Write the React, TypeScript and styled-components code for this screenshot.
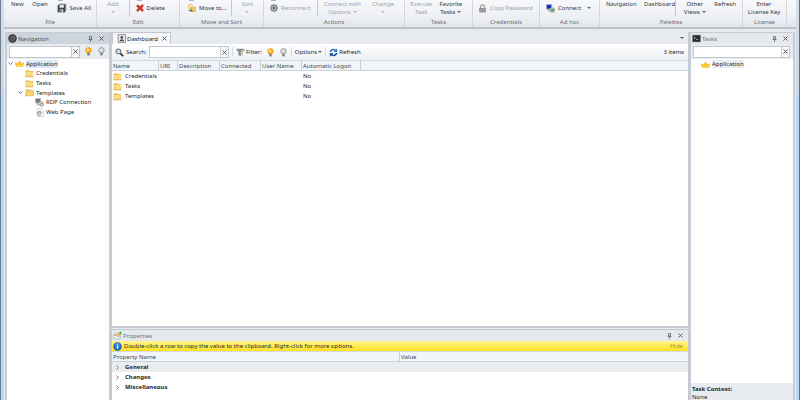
import React from "react";
import styled, { createGlobalStyle, css } from "styled-components";

const font = `"Noto Sans", "Open Sans", sans-serif`;

const GlobalStyle = createGlobalStyle`
  *, *::before, *::after { box-sizing: border-box; }
  html, body, #root { height: 100%; margin: 0; }
  body { font: 6px/8px ${font}; color: #262626; overflow: hidden; }
  button, input, table { font: inherit; color: inherit; }
  button { border: 0; padding: 0; background: none; white-space: nowrap; }
  svg { display: block; flex: none; }
  ul { list-style: none; margin: 0; padding: 0; }
`;

/* ---------- icons ---------- */
type IconProps = { size?: number };

const Svg = ({ size = 9, children }: React.PropsWithChildren<IconProps>) => (
  <svg width={size} height={size} viewBox="0 0 16 16" aria-hidden="true">{children}</svg>
);
const Folder = ({ open = false }: { open?: boolean }) => (
  <Svg>
    <path d="M1 3.500 2 2h5l1 1.500h6.500V14H1z" fill="#e6bb5c" />
    <path d="M1.500 5h13v8.500h-13z" fill="#fbdc84" />
    {open && <path d="M3.500 7H16l-2 7H1z" fill="#f9d577" stroke="#d6a23c" strokeWidth=".8" />}
    {!open && <path d="M1 14h14" stroke="#d9a944" strokeWidth="1.200" />}
  </Svg>
);
const Crown = () => (
  <Svg>
    <path d="M0 6.500l5 2L8 3l3 5.500 5-2-2.500 7h-11z" fill="#f8c826" stroke="#e3ab20" strokeWidth=".8" />
    <path d="M4 11.500h8" stroke="#ffe37a" strokeWidth="1.200" />
  </Svg>
);
const Bulb = ({ lit = false }: { lit?: boolean }) => (
  <Svg>
    <circle cx="8" cy="6" r="5" fill={lit ? "#fdb52b" : "#cfcfcf"} stroke={lit ? "#ec9418" : "#8c8c8c"} strokeWidth="1.200" />
    <circle cx="7" cy="5" r="2" fill={lit ? "#ffe79a" : "#f2f2f2"} />
    <path d="M6 10.500h4V15H6z" fill="#777" />
  </Svg>
);
const Disk = () => (
  <Svg size={10}>
    <path d="M3 1h12v12H3z" fill="#8a9096" />
    <path d="M1 3h12v12H1z" fill="#3d4247" />
    <path d="M4 3h7v4.500H4z" fill="#e3e6e9" />
    <path d="M4 10h6v5H4z" fill="#c4c9ce" />
    <path d="M5 11h2v3H5z" fill="#3d4247" />
  </Svg>
);
const RedCross = () => (
  <Svg size={8}>
    <path d="M2 2.500 14 14M14 2 2 14" stroke="#9f1c10" strokeWidth="4.600" />
    <path d="M2.500 3 13.500 13.500M13.500 2.500 2.500 13.500" stroke="#e0351f" strokeWidth="3" />
  </Svg>
);
const MoveIcon = () => (
  <Svg size={8}>
    <path d="M1 1h7l2 2v6H1z" fill="#fbe7a8" stroke="#d5a93f" />
    <path d="M5 7h10v8H5z" fill="#f6ca58" stroke="#ce9c35" />
    <path d="M1 12h5V9.500L10 13l-4 3v-2H1z" fill="#3b78bd" />
  </Svg>
);
const Reconnect = () => (
  <Svg size={8}>
    <circle cx="8" cy="8" r="7" fill="#8b8b8b" stroke="#767676" />
    <circle cx="8" cy="8" r="5" fill="#b5b5b5" />
    <path d="M6 4.500 11 8l-5 3.500z" fill="#555" />
  </Svg>
);
const Lock = () => (
  <Svg size={9}>
    <path d="M4.500 8V5a3.500 3.500 0 0 1 7 0v3" fill="none" stroke="#a0a0a0" strokeWidth="2.200" />
    <path d="M2 7h12v8H2z" fill="#929292" />
    <path d="M3 9h10M3 12h10" stroke="#b3b3b3" />
  </Svg>
);
const ConnectIcon = () => (
  <Svg size={9}>
    <path d="M1 1h9v8H1z" fill="#1524c0" stroke="#a6adb8" strokeWidth="1.400" />
    <path d="M3 11h5" stroke="#777" strokeWidth="1.500" />
    <path d="M7 7h8v7H7z" fill="#d4dcdf" stroke="#88959c" />
    <path d="M9 9h5v3H9zM9 14h5" fill="#4cb04c" stroke="#4e9e50" />
  </Svg>
);
const RdpIcon = () => (
  <Svg>
    <path d="M1 1h9v8H1z" fill="#777" stroke="#bbb" strokeWidth="1.400" />
    <path d="M3 11h5" stroke="#888" strokeWidth="1.500" />
    <path d="M7 7h7v6H7z" fill="#ddd" stroke="#999" />
    <circle cx="12" cy="12" r="3" fill="#c8c8c8" stroke="#888" />
  </Svg>
);
const WebIcon = () => (
  <Svg>
    <path d="M4 1h8l3 3v11H4z" fill="#f7f7f7" stroke="#b9b9b9" />
    <path d="M10.500 12a3.500 3.500 0 1 1 .9-3H4.500" fill="none" stroke="#858585" strokeWidth="1.600" />
  </Svg>
);
const NavIcon = () => (
  <Svg>
    <circle cx="8" cy="8" r="7.500" fill="#2e3136" />
    <circle cx="8" cy="8" r="4.500" fill="#4b5058" stroke="#8a8f96" />
    <path d="M8 8l4-4" stroke="#e2603b" strokeWidth="1.600" />
  </Svg>
);
const DashIcon = () => (
  <Svg>
    <path d="M2 1h13v14H2z" fill="#e9e9e9" stroke="#777" strokeWidth="1.300" />
    <circle cx="8.500" cy="6" r="2.300" fill="#444" />
    <path d="M4.500 13c0-5 8-5 8 0z" fill="#444" />
  </Svg>
);
const TerminalIcon = () => (
  <Svg>
    <path d="M1 2h14v12H1z" fill="#25282c" stroke="#70757a" />
    <path d="M3 5l3 2-3 2M7 9.500h4" stroke="#ddd" fill="none" strokeWidth="1.200" />
  </Svg>
);
const PropsIcon = () => (
  <Svg size={9}>
    <path d="M1 6h12v8H1z" fill="#eef0f3" stroke="#a6acb4" />
    <path d="M2 8l4-4 7 2-2 4-4-1z" fill="#f1c878" stroke="#c0974f" strokeWidth=".8" />
    <path d="M13 1v5M10.500 3.500h5" stroke="#3ca83c" strokeWidth="2" />
  </Svg>
);
const InfoIcon = () => (
  <Svg>
    <circle cx="8" cy="8" r="7.500" fill="#1d63b5" />
    <circle cx="8" cy="6" r="5" fill="#3f87d3" />
    <path d="M8 3v2M8 6.500v6" stroke="#fff" strokeWidth="2" />
  </Svg>
);
const Magnifier = () => (
  <Svg>
    <circle cx="6" cy="6" r="4.300" fill="#d9dde1" stroke="#6d7379" strokeWidth="1.800" />
    <path d="M9.500 9.500 14.500 14.500" stroke="#2f3336" strokeWidth="3" />
  </Svg>
);
const FunnelIcon = () => (
  <Svg>
    <path d="M1 2h11L8 8v6l-3-2V8z" fill="#8e9296" stroke="#6c7074" />
    <path d="M8 3h7l-4 5v5" fill="none" stroke="#7e8286" strokeWidth="1.500" />
  </Svg>
);
const RefreshIcon = () => (
  <Svg size={9}>
    <path d="M1 7a7 6.500 0 0 1 11-4.500L14.500 1v6H8l2-2C7.500 3 5 4.500 4.500 7z" fill="#3573c8" />
    <path d="M15 9a7 6.500 0 0 1-11 4.500L1.500 15V9H8l-2 2c2.500 2 5 .5 5.500-2z" fill="#1c4fa6" />
  </Svg>
);
const Cross = ({ size = 5 }: IconProps) => (
  <svg width={size} height={size} viewBox="0 0 10 10" aria-hidden="true">
    <path d="M1 1l8 8M9 1 1 9" stroke="#4a4d52" strokeWidth="1.800" />
  </svg>
);
const Pin = () => (
  <svg width="5" height="6" viewBox="0 0 10 12" aria-hidden="true">
    <path d="M3 1h4v5H3zM1 7h8M5 7v5" stroke="#5c6066" strokeWidth="1.500" fill="none" />
  </svg>
);
const Caret = () => (
  <svg width="4" height="2" viewBox="0 0 8 4" aria-hidden="true"><path d="M0 0h8L4 4z" fill="currentColor" fillOpacity=".75" /></svg>
);
const Chevron = ({ open = false }: { open?: boolean }) => (
  <svg width="5" height="5" viewBox="0 0 10 10" aria-hidden="true">
    <path d={open ? "M1 3l4 4 4-4" : "M3 1l4 4-4 4"} stroke="#62666c" strokeWidth="1.800" fill="none" />
  </svg>
);
const Stub = () => (
  <svg width="8" height="1" viewBox="0 0 8 1" aria-hidden="true"><path d="M1 0h5v1H1z" fill="#b3b7bc" /></svg>
);

/* ---------- window ---------- */
const Window = styled.div`
  display: flex;
  flex-direction: column;
  height: 100vh;
  background: linear-gradient(#d5dfe9, #cbd8e5 94px, #b7d7f6 94px);
  border-left: 1px solid #6d7f90;
  border-right: 1px solid #4f7599;
  padding: 0 3px;
`;

/* ---------- ribbon ---------- */
const Ribbon = styled.header`
  display: grid;
  grid-template-columns: 93fr 83fr 84fr 141fr 68fr 67fr 60fr 143fr 44fr 9fr;
  flex: none;
  height: 29px;
  background: linear-gradient(#f7f8fa, #eceff3 65%, #e2e5ea);
  border-bottom: 2px solid #bdc1c6;
`;
const Group = styled.section`
  display: flex;
  flex-direction: column;
  justify-content: space-between;
  min-width: 0;
  border-right: 1px solid #d3d6db;
`;
const GroupBody = styled.div<{ $cols: string }>`
  display: grid;
  grid-template-columns: ${(p) => p.$cols};
  height: 16px;
`;
const GroupName = styled.div`
  text-align: center;
  color: #6a6e74;
  line-height: 9px;
`;
const disabledText = css<{ $off?: boolean }>`color: ${(p) => (p.$off ? "#a0a3a7" : "#33373c")};`;
const divided = css<{ $divided?: boolean }>`
  border-right: 1px solid ${(p) => (p.$divided ? "#c5c9ce" : "transparent")};
`;
const BigButton = styled.button<{ $off?: boolean; $divided?: boolean }>`
  display: flex;
  flex-direction: column;
  align-items: center;
  min-width: 0;
  line-height: 8px;
  ${disabledText}
  ${divided}
`;
const SecondLine = styled.span`
  display: flex;
  align-items: center;
  gap: 2px;
  height: 8px;
`;
const SmallColumn = styled.div<{ $pad: number; $divided?: boolean }>`
  display: flex;
  flex-direction: column;
  justify-content: space-between;
  min-width: 0;
  padding: 0 0 3px ${(p) => p.$pad}px;
  ${divided}
`;
const SmallButton = styled.button<{ $off?: boolean }>`
  display: flex;
  align-items: center;
  gap: 3px;
  height: 10px;
  ${disabledText}
  & > svg:last-child:not(:first-child) { margin-left: 3px; }
`;

type BigProps = { text: string; second?: string; menu?: boolean; off?: boolean; divided?: boolean };
const Big = ({ text, second, menu, off, divided: d }: BigProps) => (
  <BigButton $off={off} $divided={d} disabled={off}>
    <span>{text}</span>
    {(second || menu) && <SecondLine>{second}{menu && <Caret />}</SecondLine>}
  </BigButton>
);
type SmallProps = { icon: React.ReactNode; text: string; pad: number; menu?: boolean; off?: boolean; divided?: boolean; stub?: boolean };
const Small = ({ icon, text, pad, menu, off, divided: d, stub }: SmallProps) => (
  <SmallColumn $pad={pad} $divided={d}>
    {stub ? <Stub /> : <span />}
    <SmallButton $off={off} disabled={off}>{icon}{text}{menu && <Caret />}</SmallButton>
  </SmallColumn>
);
const RibbonGroup = ({ name, cols, children }: React.PropsWithChildren<{ name: string; cols: string }>) => (
  <Group aria-label={name}>
    <GroupBody $cols={cols}>{children}</GroupBody>
    <GroupName>{name}</GroupName>
  </Group>
);

/* ---------- panels ---------- */
const Workspace = styled.main`
  display: grid;
  grid-template-columns: 106px minmax(0, 1fr) 106px;
  flex: 1;
  min-height: 0;
  padding: 3px 1px 0;
  background: #e7ebf0;
`;
const Panel = styled.aside`
  display: flex;
  flex-direction: column;
  min-height: 0;
  background: #fff;
  border: solid #c6ccd4;
  border-width: 1px 2px 0;
`;
const PanelTitle = styled.div<{ $active?: boolean }>`
  display: flex;
  align-items: center;
  gap: 1px;
  flex: none;
  height: 11px;
  padding: 0 3px 0 1px;
  color: ${(p) => (p.$active ? "#4a4f56" : "#6f7379")};
  background: ${(p) => (p.$active ? "#ced4dc" : "#e5e8ed")};
`;
const TitleText = styled.h2`
  flex: 1;
  margin: 0;
  font: inherit;
`;
const TitleButton = styled.button`
  display: grid;
  place-items: center;
  width: 10px;
  height: 9px;
`;
const SearchStrip = styled.div`
  display: flex;
  align-items: center;
  gap: 4px;
  flex: none;
  height: 15px;
  padding: 0 3px 0 2px;
  background: #e8ebf0;
`;
const SearchField = styled.div<{ $width?: number }>`
  display: flex;
  flex: ${(p) => (p.$width ? `0 0 ${p.$width}px` : "1")};
  min-width: 0;
  height: 12px;
  background: #fff;
  border: 1px solid #c3c8cf;
`;
const SearchInput = styled.input`
  flex: 1;
  min-width: 0;
  border: 0;
  padding: 0 2px;
  outline: 0;
`;
const ClearButton = styled.button`
  display: grid;
  place-items: center;
  width: 8px;
  background: #f4f6f8;
  border-left: 1px solid #c3c8cf;
`;
const Search = ({ label, id, width }: { label: string; id: string; width?: number }) => (
  <SearchField $width={width}>
    <SearchInput id={id} aria-label={label} />
    <ClearButton aria-label="Clear"><Cross /></ClearButton>
  </SearchField>
);
const IconButton = styled.button`
  display: grid;
  place-items: center;
  width: 9px;
  height: 10px;
`;

/* ---------- tree ---------- */
const Tree = styled.ul<{ $rows: number }>`
  display: grid;
  grid-auto-rows: 1fr;
  height: ${(p) => Math.round(p.$rows * 9.6)}px;
`;
const TreeRow = styled.li<{ $level: number }>`
  display: flex;
  align-items: center;
  gap: 2px;
  min-height: 0;
  padding-left: ${(p) => 1 + p.$level * 10}px;
  white-space: nowrap;
`;
const Toggle = styled.span`
  width: 5px;
`;
const NodeLabel = styled.span<{ $tint?: string }>`
  line-height: 8px;
  background: ${(p) => p.$tint ?? "none"};
`;
type Node = { text: string; level: number; icon: React.ReactNode; open?: boolean; tint?: string };
const nodes: Node[] = [
  { text: "Application", level: 0, icon: <Crown />, open: true, tint: "#dce8f7" },
  { text: "Credentials", level: 1, icon: <Folder /> },
  { text: "Tasks", level: 1, icon: <Folder /> },
  { text: "Templates", level: 1, icon: <Folder open />, open: true },
  { text: "RDP Connection", level: 2, icon: <RdpIcon /> },
  { text: "Web Page", level: 2, icon: <WebIcon /> },
];
const TreeView = ({ items }: { items: Node[] }) => (
  <Tree $rows={items.length}>
    {items.map((n) => (
      <TreeRow key={n.text} $level={n.level}>
        <Toggle>{n.open && <Chevron open />}</Toggle>
        {n.icon}
        <NodeLabel $tint={n.tint}>{n.text}</NodeLabel>
      </TreeRow>
    ))}
  </Tree>
);

/* ---------- centre ---------- */
const Center = styled.div`
  display: grid;
  grid-template-rows: minmax(0, 1fr) 71px;
  gap: 1px;
  min-height: 0;
`;
const Document = styled.section`
  display: flex;
  flex-direction: column;
  min-height: 0;
  border: solid #c6ccd4;
  border-width: 0 1px 2px;
  background: #fff;
`;
const TabStrip = styled.div`
  display: flex;
  align-items: center;
  justify-content: space-between;
  flex: none;
  height: 12px;
  padding-right: 2px;
  background: #e7ebf0;
`;
const Tab = styled.div`
  display: flex;
  align-items: center;
  gap: 1px;
  height: 12px;
  padding: 0 1px 0 4px;
  background: #f4f6f9;
  border: 1px solid #c3c8d0;
  border-bottom: 0;
`;
const Toolbar = styled.div`
  display: flex;
  align-items: center;
  flex: none;
  height: 16px;
  padding: 0 4px 0 3px;
  background: linear-gradient(#fff, #eef0f4);
`;
const ToolLabel = styled.label`
  width: 23px;
  margin-left: 2px;
`;
const ToolSeparator = styled.span`
  width: 1px;
  height: 10px;
  margin: 0 3px;
  background: #d5d8dd;
`;
const ToolButton = styled.button`
  display: flex;
  align-items: center;
  gap: 1px;
`;
const FilterTools = styled.div`
  display: flex;
  align-items: center;
  gap: 4px;
`;
const Count = styled.span`
  margin-left: auto;
`;
const Table = styled.table`
  width: 100%;
  table-layout: fixed;
  border-collapse: separate;
  border-spacing: 0;
`;
const Th = styled.th<{ $width?: string }>`
  width: ${(p) => p.$width ?? "auto"};
  height: 11px;
  padding: 0 0 0 1px;
  overflow: visible;
  white-space: nowrap;
  font-weight: 400;
  text-align: left;
  color: #44494f;
  background: #f1f4f8;
  border-top: 1px solid #d5dae0;
  border-bottom: 1px solid #cbd1d8;
  border-right: 1px solid #c9ced5;
  &:last-child { border-right: 0; }
`;
const Td = styled.td`
  height: 10px;
  padding: 0 0 0 1px;
  white-space: nowrap;
`;
const NameCell = styled.div`
  display: flex;
  align-items: center;
  gap: 3px;
`;
const Properties = styled.section`
  display: flex;
  flex-direction: column;
  min-height: 0;
  border: solid #c3c9d1;
  border-width: 1px 1px 0;
  background: #fff;
`;
const Notice = styled.div`
  display: flex;
  align-items: center;
  gap: 2px;
  flex: none;
  height: 10px;
  padding: 0 5px 0 1px;
  background: linear-gradient(#fff590, #ffe21f);
`;
const HideLink = styled.a`
  margin-left: auto;
  color: #a08f3c;
  text-decoration: none;
`;
const PropTr = styled.tr<{ $shaded?: boolean }>`
  background: ${(p) => (p.$shaded ? "#ebecee" : "#fff")};
  font-weight: 700;
`;
const PropName = styled.div`
  display: flex;
  align-items: center;
  gap: 5px;
  padding-left: 2px;
`;
const TasksBody = styled.div`
  flex: 1;
  padding-left: 2px;
`;
const Context = styled.footer`
  padding: 2px 1px 0;
  height: 17px;
  line-height: 8px;
  overflow: hidden;
  background: #e8ebf0;
`;

const columns: [string, string?][] = [
  ["Name", "47px"], ["URI", "19px"], ["Description", "42px"], ["Connected", "41px"],
  ["User Name", "41px"], ["Automatic Logon", "59px"], [""],
];

export default function App() {
  return (
    <>
      <GlobalStyle />
      <Window>
        <Ribbon>
          <RibbonGroup name="File" cols="28fr 18fr 47fr">
            <Big text="New" />
            <Big text="Open" />
            <Small icon={<Disk />} text="Save All" pad={7} stub />
          </RibbonGroup>
          <RibbonGroup name="Edit" cols="33fr 50fr">
            <Big text="Add" menu off divided />
            <Small icon={<RedCross />} text="Delete" pad={6} stub />
          </RibbonGroup>
          <RibbonGroup name="Move and Sort" cols="53fr 31fr">
            <Small icon={<MoveIcon />} text="Move to..." pad={8} divided stub />
            <Big text="Sort" menu off />
          </RibbonGroup>
          <RibbonGroup name="Actions" cols="54fr 51fr 31fr 5fr">
            <Small icon={<Reconnect />} text="Reconnect" pad={6} off divided stub />
            <Big text="Connect with" second="Options" menu off />
            <Big text="Change" menu off />
          </RibbonGroup>
          <RibbonGroup name="Tasks" cols="34fr 26fr 8fr">
            <Big text="Execute" second="Task" off />
            <Big text="Favorite" second="Tasks" menu />
          </RibbonGroup>
          <RibbonGroup name="Credentials" cols="1fr">
            <Small icon={<Lock />} text="Copy Password" pad={5} off />
          </RibbonGroup>
          <RibbonGroup name="Ad hoc" cols="1fr">
            <Small icon={<ConnectIcon />} text="Connect" pad={6} menu />
          </RibbonGroup>
          <RibbonGroup name="Palettes" cols="44fr 33fr 38fr 23fr 5fr">
            <Big text="Navigation" />
            <Big text="Dashboard" divided />
            <Big text="Other" second="Views" menu />
            <Big text="Refresh" />
          </RibbonGroup>
          <RibbonGroup name="License" cols="1fr">
            <Big text="Enter" second="License Key" />
          </RibbonGroup>
        </Ribbon>

        <Workspace>
          <Panel>
            <PanelTitle $active>
              <NavIcon />
              <TitleText>Navigation</TitleText>
              <TitleButton aria-label="Pin"><Pin /></TitleButton>
              <TitleButton aria-label="Close"><Cross /></TitleButton>
            </PanelTitle>
            <SearchStrip>
              <Search label="Search navigation" id="nav-search" />
              <IconButton aria-label="Highlight"><Bulb lit /></IconButton>
              <IconButton aria-label="Clear highlight"><Bulb /></IconButton>
            </SearchStrip>
            <TreeView items={nodes} />
          </Panel>

          <Center>
            <Document>
              <TabStrip>
                <Tab>
                  <DashIcon />
                  Dashboard
                  <TitleButton aria-label="Close tab"><Cross /></TitleButton>
                </Tab>
                <IconButton aria-label="Tab list"><Caret /></IconButton>
              </TabStrip>
              <Toolbar>
                <Magnifier />
                <ToolLabel htmlFor="dash-search">Search:</ToolLabel>
                <Search label="Search" id="dash-search" width={80} />
                <ToolSeparator />
                <FilterTools>
                  <ToolButton><FunnelIcon />Filter:</ToolButton>
                  <IconButton aria-label="Filter on"><Bulb lit /></IconButton>
                  <IconButton aria-label="Filter off"><Bulb /></IconButton>
                </FilterTools>
                <ToolSeparator />
                <ToolButton>Options<Caret /></ToolButton>
                <ToolSeparator />
                <ToolButton><RefreshIcon />Refresh</ToolButton>
                <Count>3 items</Count>
              </Toolbar>
              <Table>
                <thead>
                  <tr>{columns.map(([name, width]) => <Th key={name} $width={width}>{name}</Th>)}</tr>
                </thead>
                <tbody>
                  {["Credentials", "Tasks", "Templates"].map((name) => (
                    <tr key={name}>
                      <Td colSpan={5}><NameCell><Folder />{name}</NameCell></Td>
                      <Td>No</Td>
                      <Td />
                    </tr>
                  ))}
                </tbody>
              </Table>
            </Document>

            <Properties>
              <PanelTitle>
                <PropsIcon />
                <TitleText>Properties</TitleText>
                <TitleButton aria-label="Pin"><Pin /></TitleButton>
                <TitleButton aria-label="Close"><Cross /></TitleButton>
              </PanelTitle>
              <Notice>
                <InfoIcon />
                Double-click a row to copy the value to the clipboard. Right-click for more options.
                <HideLink href="#hide">Hide</HideLink>
              </Notice>
              <Table>
                <thead>
                  <tr><Th $width="50%">Property Name</Th><Th>Value</Th></tr>
                </thead>
                <tbody>
                  {["General", "Changes", "Miscellaneous"].map((name, i) => (
                    <PropTr key={name} $shaded={i === 0}>
                      <Td colSpan={2}><PropName><Chevron />{name}</PropName></Td>
                    </PropTr>
                  ))}
                </tbody>
              </Table>
            </Properties>
          </Center>

          <Panel>
            <PanelTitle>
              <TerminalIcon />
              <TitleText>Tasks</TitleText>
              <TitleButton aria-label="Pin"><Pin /></TitleButton>
              <TitleButton aria-label="Close"><Cross /></TitleButton>
            </PanelTitle>
            <SearchStrip>
              <Search label="Search tasks" id="task-search" />
            </SearchStrip>
            <TasksBody>
              <TreeView items={[{ text: "Application", level: 0, icon: <Crown />, tint: "#ececee" }]} />
            </TasksBody>
            <Context>
              <strong>Task Context:</strong>
              <div>None</div>
            </Context>
          </Panel>
        </Workspace>
      </Window>
    </>
  );
}
